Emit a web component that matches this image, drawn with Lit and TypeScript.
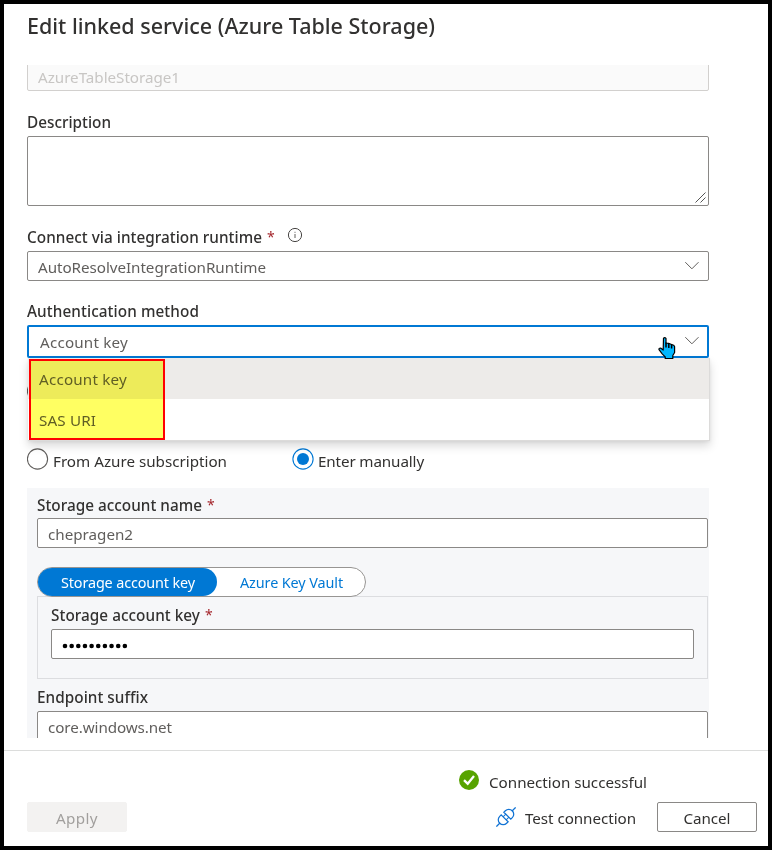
import { LitElement, html, css, svg } from "lit";
import { customElement, property } from "lit/decorators.js";
import { styleMap } from "lit/directives/style-map.js";

const pen = document.createElement("canvas").getContext("2d")!;

/** A single line of text, tracked so that it fills a given width. */
@customElement("ui-text")
class UiText extends LitElement {
  static styles = css`
    :host { display: inline-block; white-space: pre; }
    .label { display: block; }
  `;
  @property() text = "";
  @property({ type: Number }) width = 0;
  @property({ type: Number }) size = 15;
  @property({ type: Number }) weight = 400;

  render() {
    pen.font = `${this.weight} ${this.size}px "Noto Sans"`;
    const spacing = (this.width - pen.measureText(this.text).width) / this.text.length;
    return html`<span class="label" style=${styleMap({
      letterSpacing: `${spacing.toFixed(3)}px`,
      fontSize: `${this.size}px`,
      fontWeight: String(this.weight),
    })}>${this.text}</span>`;
  }
}

const LABEL_WEIGHT = 500;
const label = (text: string, width: number, required = false) => html`
  <div class="label"><ui-text .text=${text} .width=${width} .size=${15.3} .weight=${LABEL_WEIGHT}></ui-text>${required ? html`<span class="req">*</span>` : ""}</div>`;
const text = (value: string, width: number, size = 15.2) => html`<ui-text .text=${value} .width=${width} .size=${size}></ui-text>`;

const chevron = html`<svg class="chevron" width="16" height="10" viewBox="0 0 16 10">
  <path d="M1.3 1.2 L7.9 7.8 L14.5 1.2" fill="none" stroke="#605e5c" stroke-width="1"/></svg>`;

const info = html`<svg class="info" width="16" height="16" viewBox="0 0 16 16">
  <circle cx="8" cy="8" r="6.6" fill="none" stroke="#484644" stroke-width="1"/>
  <path d="M8 7V11" stroke="#605e5c" stroke-width="1"/><rect x="7.5" y="4.8" width="1" height="1" fill="#605e5c"/></svg>`;

const radio = (on: boolean) => html`<svg class="radio" width="22" height="22" viewBox="0 0 22 22">
  <circle cx=${on ? 11 : 10.5} cy="11" r="10.1" fill="#fff" stroke=${on ? "#0078d4" : "#605e5c"} stroke-width="1.1"/>
  ${on ? svg`<circle cx="11" cy="11" r="6" fill="#0078d4"/>` : ""}</svg>`;

const check = html`<svg class="check" width="20" height="20" viewBox="0 0 20 20">
  <circle cx="10" cy="10" r="10" fill="#57a300"/>
  <path d="M5 10.2 L8.7 13.7 L15 6" fill="none" stroke="#fff" stroke-width="2.3"/></svg>`;

const plug = html`<svg class="plug" width="20" height="20" viewBox="0 0 20 20">
  <g transform="translate(10 10) rotate(-45)" fill="none" stroke="#1173d4" stroke-width="1.25">
    <path d="M-13.6 0H-8.2 M8.2 0H13.6"/>
    <path d="M-1.9 -4.9V4.9H-4A4.9 4.9 0 0 1 -4 -4.9Z"/>
    <path d="M1.9 -4.9V4.9H4A4.9 4.9 0 0 0 4 -4.9Z"/>
    <path d="M-2 -2.2H2 M-2 2.2H2" stroke-width="1"/>
  </g></svg>`;

const hand = html`<svg class="hand" width="18" height="23" viewBox="0 0 18 23">
  <path d="M5.5 1.2 Q6.8 .2 8 1.4 V6 L10.5 6.3 L13 7.2 L15.6 8.2 L16.6 9.5 V15.5 L14.8 18.5 V21.5 H7.2 V19.8 L4.2 16.8 L1 12.6 Q.8 11 2.6 11 L5.2 13 Z"
    fill="#00b7ff" stroke="#000" stroke-width="1.2" stroke-linejoin="round"/>
  <path d="M8 5.5V10.5 M10.8 6.5V11 M13.6 7.5V11.5" stroke="#000" stroke-width="1.5"/></svg>`;

const dots = html`<svg class="dots" width="68" height="6" viewBox="0 0 68 6">
  ${Array.from({ length: 10 }, (_, i) => svg`<circle cx=${3 + i * 6.65} cy="3" r="2.3"/>`)}</svg>`;

@customElement("app-root")
class AppRoot extends LitElement {
  static styles = css`
    :host {
      display: flex; flex-direction: column; box-sizing: border-box;
      width: 772px; height: 850px; border: 4px solid #000; background: #fff;
      font: 15px/20px "Noto Sans", "Open Sans", sans-serif; color: #323130; overflow: hidden;
    }
    * { box-sizing: border-box; }
    svg { display: block; flex: none; }
    .title { height: 61px; padding: 7px 23px 0; line-height: 30px; color: #323130; flex: none; }
    .scroll { height: 673px; padding: 0 23px; overflow: hidden; flex: none; width: 728px; }
    .label { height: 20px; display: flex; color: #323130; }
    .req { color: #a4262c; margin-left: 5px; font-size: 14px; width: 8px; }
    .input {
      height: 30px; border: 1px solid #8a8886; border-radius: 2px; background: #fff;
      color: #605e5c; padding: 5px 8px 0 10px; display: flex; justify-content: space-between;
    }
    .name { margin-top: -4px; background: #fafafa; border-color: #d2d0ce; color: #c8c6c4; }
    .desc { margin-top: 21px; }
    .area {
      height: 70px; margin-top: 4px; border: 1px solid #8a8886; border-radius: 2px;
      display: flex; justify-content: flex-end; align-items: flex-end; padding: 0 2px 2px 0;
    }
    .runtime { margin-top: 21px; }
    .info { margin: 0 0 0 12px; }
    .runtime .input { margin-top: 4px; }
    .chevron { margin-top: 4px; }
    .auth { margin-top: 20px; }
    .select { position: relative; margin-top: 4px; }
    .focus { height: 33px; border: 2px solid #0078d4; padding: 5px 7px 0 11px; }
    .menu {
      position: absolute; z-index: 2; left: 1px; top: 33px; width: 682px; height: 83px;
      background: #fff; border: solid #dcdbda; border-width: 0 1px 1px 0;
      box-shadow: 0 5px 9px rgba(0,0,0,.15), 0 1px 3px rgba(0,0,0,.06);
    }
    .item { height: 41px; padding: 11px 0 0 11px; color: #605e5c; }
    .item.on { background: #edebe9; }
    .mark {
      position: absolute; z-index: 3; left: 2px; top: 34px; width: 136px; height: 81px;
      background: #ffff62; mix-blend-mode: multiply;
    }
    .outline { position: absolute; z-index: 4; left: 2px; top: 34px; width: 136px; height: 81px; border: 2px solid #f00; }
    .hand { position: absolute; z-index: 5; left: 631px; top: 12px; }
    .under { height: 90px; padding-top: 22px; }
    .radios { display: flex; align-items: flex-start; height: 40px; }
    .choice { display: flex; width: 265px; }
    .choice ui-text { margin: 3px 0 0 4px; }
    .panel { background: #f6f7f9; padding: 7px 1px 0 10px; height: 270px; }
    .panel > .input { margin-top: 3px; }
    .pill {
      display: flex; width: 329px; height: 30px; margin-top: 19px; border: 1px solid #979593;
      border-radius: 15px; background: #fff; color: #0078d4; position: relative;
    }
    .seg { padding: 4px 0 0 23px; }
    .seg.on { width: 179px; height: 28px; border-radius: 14px; background: #0078d4; color: #fff; }
    .box { border: 1px solid #dcdde0; height: 83px; margin-top: -1px; padding: 8px 13px 0; }
    .box .input { margin-top: 4px; }
    .dots { margin-top: 8px; fill: #000; }
    .end { margin-top: 8px; }
    .panel .end-input { margin-top: 4px; }
    .rule { height: 1px; background: #dcdddc; margin-top: 12px; flex: none; }
    .status { display: flex; height: 32px; margin: 19px 0 0 455px; color: #323130; }
    .status ui-text { margin: 2px 0 0 10px; }
    .actions { display: flex; padding-left: 23px; }
    .btn { width: 100px; height: 30px; border: 1px solid #8a8886; border-radius: 2px; text-align: center; padding-top: 5px; }
    .btn.off { background: #f3f2f1; border-color: #f3f2f1; color: #a19f9d; }
    .test { display: flex; margin: 6px 21px 0 369px; }
    .plug { margin: -1px 9px 0 0; }
  `;

  render() {
    return html`
      <div class="title"><ui-text .text=${"Edit linked service (Azure Table Storage)"} .width=${408} .size=${21.5} .weight=${500}></ui-text></div>
      <div class="scroll">
        <div class="input name">${text("AzureTableStorage1", 142)}</div>
        <div class="desc">${label("Description", 84)}
          <div class="area"><svg width="11" height="11" viewBox="0 0 11 11"><path d="M.5 10.5L10.5 .5M5.5 10.5L10.5 5.5" stroke="#555" stroke-width="1"/></svg></div>
        </div>
        <div class="runtime">
          <div class="label"><ui-text .text=${"Connect via integration runtime"} .width=${235} .size=${15.3} .weight=${LABEL_WEIGHT}></ui-text><span class="req">*</span>${info}</div>
          <div class="input">${text("AutoResolveIntegrationRuntime", 228)}${chevron}</div>
        </div>
        <div class="auth">${label("Authentication method", 172)}
          <div class="select">
            <div class="input focus">${text("Account key", 88)}${chevron}</div>
            <div class="menu">
              <div class="item on">${text("Account key", 88)}</div>
              <div class="item">${text("SAS URI", 57)}</div>
            </div>
            <div class="mark"></div><div class="outline"></div>${hand}
          </div>
        </div>
        <div class="under">${radio(false)}</div>
        <div class="radios">
          <div class="choice">${radio(false)}${text("From Azure subscription", 174)}</div>
          <div class="choice">${radio(true)}${text("Enter manually", 106)}</div>
        </div>
        <div class="panel">
          ${label("Storage account name", 165, true)}
          <div class="input">${text("chepragen2", 85)}</div>
          <div class="pill">
            <div class="seg on">${text("Storage account key", 134, 14.4)}</div>
            <div class="seg">${text("Azure Key Vault", 103, 14.4)}</div>
          </div>
          <div class="box">${label("Storage account key", 149, true)}
            <div class="input">${dots}</div>
          </div>
          <div class="end">${label("Endpoint suffix", 111)}</div>
          <div class="input end-input">${text("core.windows.net", 124)}</div>
        </div>
      </div>
      <div class="rule"></div>
      <div class="status">${check}${text("Connection successful", 158)}</div>
      <div class="actions">
        <div class="btn off">${text("Apply", 42)}</div>
        <div class="test">${plug}${text("Test connection", 111)}</div>
        <div class="btn">${text("Cancel", 47)}</div>
      </div>`;
  }
}
